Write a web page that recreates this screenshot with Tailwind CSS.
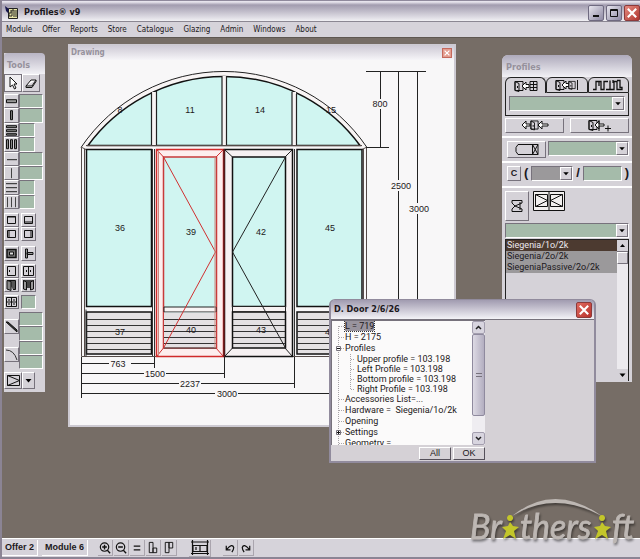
<!DOCTYPE html>
<html lang="en">
<head>
  <meta charset="UTF-8" />
  <meta name="viewport" content="width=device-width, initial-scale=1" />
  <title>Profiles® v9</title>
  <script src="https://cdn.jsdelivr.net/npm/@tailwindcss/browser@4"></script>
</head>
<body class="font-['Liberation_Sans',sans-serif] text-[9px] text-[#1c1820]">
  <!-- Shared icons -->
  <svg class="hidden">
    <symbol id="arrow" viewBox="0 0 11 11"><path d="M2.500 4h6L5.500 7.500z" fill="#000" /></symbol>
    <symbol id="door" viewBox="0 0 10 12"><path d="M1 1.500h8v9h-8zM1 1.500l4 2v8l-4-1z" fill="#d4d0d6" stroke="#111" /><path d="M3.500 6v2" stroke="#111" /></symbol>
    <symbol id="close" viewBox="0 0 10 10"><path d="M2 2l6 6M8 2l-6 6" stroke="#fff" stroke-width="1.500" /></symbol>
  </svg>

  <div class="flex h-screen flex-col overflow-hidden border-l-2 border-[#8b8494] bg-[#d6d3da]">
    <!-- Title bar -->
    <header class="flex h-[21px] shrink-0 items-center gap-1 border-t border-[#8f899c] bg-linear-to-b from-[#e6e3ec] from-5% via-[#a29caf] via-20% to-[#f1f0f4] pl-0.5">
      <svg class="mt-1 h-4 w-4" viewBox="0 0 16 16"><path d="M4.500 3.500h9v10h-9z" fill="#e9e6a8" stroke="#222" /><path d="M7 5v3H5v3h3V5h2v7M12 5v7" fill="none" stroke="#222" /><path d="M1 1l4 3-1 4-2-2z" fill="#15154c" /></svg>
      <h1 class="mt-1 flex-1 font-['DejaVu_Sans_Condensed','DejaVu_Sans',sans-serif] text-[9px] font-bold">Profiles® v9</h1>
      <div class="mt-1 flex gap-0.5">
        <button aria-label="Minimize" class="h-4 w-4 rounded-xs border border-[#6f6a80] bg-linear-to-br from-[#e8e6ee] to-[#8f8aa4]"><svg viewBox="0 0 14 14"><path d="M4 10h6" stroke="#111" stroke-width="2" /></svg></button>
        <button aria-label="Maximize" class="h-4 w-4 rounded-xs border border-[#6f6a80] bg-linear-to-br from-[#e8e6ee] to-[#8f8aa4]"><svg viewBox="0 0 14 14"><path d="M3.500 3.500h7v7h-7zM3 4.500h8" fill="none" stroke="#111" /></svg></button>
        <button aria-label="Close" class="h-4 w-4 rounded-xs border border-[#8d3a3a] bg-linear-to-br from-[#e48a80] to-[#b03430]"><svg class="h-full w-full"><use href="#close" /></svg></button>
      </div>
    </header>

    <!-- Menu -->
    <nav class="flex h-4 shrink-0 items-center gap-[10px] border-t border-[#8b8792] bg-[#d6d3da] pl-1 font-['DejaVu_Sans_Condensed','DejaVu_Sans',sans-serif] text-[8px]">
      <a href="#">Module</a>
      <a href="#">Offer</a>
      <a href="#">Reports</a>
      <a href="#">Store</a>
      <a href="#">Catalogue</a>
      <a href="#">Glazing</a>
      <a href="#">Admin</a>
      <a href="#">Windows</a>
      <a href="#">About</a>
    </nav>

    <main class="relative flex-1 border-t border-[#5e5751] bg-[#766d66]">
      <!-- Tools -->
      <section class="absolute top-[15px] left-[2px] w-[41px] rounded-tr-md bg-[#d5d2d8] pb-[3px]">
        <h2 class="flex h-[21px] items-center rounded-t-sm bg-linear-to-b from-[#b9b5c4] to-[#f2f1f5] pt-1 pl-[3px] font-['DejaVu_Sans_Condensed','DejaVu_Sans',sans-serif] text-[9px] font-bold text-[#96919c]">Tools</h2>
        <div class="flex">
          <button aria-label="Select" class="h-[18px] w-[18px] border border-[#77727c] bg-[#efedf0]"><svg viewBox="0 0 16 16"><path d="M5 2v10l2.500-2 2 4 1.500-1-2-4h3z" fill="#fff" stroke="#111" /></svg></button>
          <button aria-label="Erase" class="h-[18px] w-[18px] border border-t-white border-r-[#77727c] border-b-[#77727c] border-l-white"><svg viewBox="0 0 16 16"><path d="M3 11l5-6h5l-4 6zM3 11v1.500h6L13 6.500V5" fill="#fff" stroke="#111" /></svg></button>
        </div>
        <div class="mt-[2px] grid h-[115px] grid-cols-[15px_1fr] grid-rows-8 pr-0.5">
          <button aria-label="Thick transom" class="border border-t-white border-r-[#77727c] border-b-[#77727c] border-l-white"><svg class="h-full w-full" viewBox="0 0 13 12"><path d="M1.500 4.500h10v3h-10z" fill="#999" stroke="#111" /></svg></button>
          <input aria-label="Thick transom size" class="w-full min-w-0 border border-t-[#77727c] border-r-white border-b-white border-l-[#77727c] bg-[#a5bbaa]" />
          <button aria-label="Thick mullion" class="border border-t-white border-r-[#77727c] border-b-[#77727c] border-l-white"><svg class="h-full w-full" viewBox="0 0 13 12"><path d="M5.500 1.500h2v9h-2z" fill="#777" stroke="#111" /></svg></button>
          <input aria-label="Thick mullion size" class="w-full min-w-0 border border-t-[#77727c] border-r-white border-b-white border-l-[#77727c] bg-[#a5bbaa]" />
          <button aria-label="Thick transoms" class="border border-t-white border-r-[#77727c] border-b-[#77727c] border-l-white"><svg class="h-full w-full" viewBox="0 0 13 12"><path d="M1.500 1.500h10v2h-10zM1.500 5.500h10v2h-10zM1.500 9.500h10v1.500h-10z" fill="#888" stroke="#111" /></svg></button>
          <input aria-label="Thick transoms count" class="w-4 border border-t-[#77727c] border-r-white border-b-white border-l-[#77727c] bg-[#a5bbaa]" />
          <button aria-label="Thick mullions" class="border border-t-white border-r-[#77727c] border-b-[#77727c] border-l-white"><svg class="h-full w-full" viewBox="0 0 13 12"><path d="M1.500 1.500h2v9h-2zM5.500 1.500h2v9h-2zM9.500 1.500h2v9h-2z" fill="#888" stroke="#111" /></svg></button>
          <input aria-label="Thick mullions count" class="w-4 border border-t-[#77727c] border-r-white border-b-white border-l-[#77727c] bg-[#a5bbaa]" />
          <button aria-label="Thin transom" class="border border-t-white border-r-[#77727c] border-b-[#77727c] border-l-white"><svg class="h-full w-full" viewBox="0 0 13 12"><path d="M2 6.500h10" stroke="#222" /></svg></button>
          <input aria-label="Thin transom size" class="w-full min-w-0 border border-t-[#77727c] border-r-white border-b-white border-l-[#77727c] bg-[#a5bbaa]" />
          <button aria-label="Thin mullion" class="border border-t-white border-r-[#77727c] border-b-[#77727c] border-l-white"><svg class="h-full w-full" viewBox="0 0 13 12"><path d="M6.500 1v10" stroke="#444" /></svg></button>
          <input aria-label="Thin mullion size" class="w-full min-w-0 border border-t-[#77727c] border-r-white border-b-white border-l-[#77727c] bg-[#a5bbaa]" />
          <button aria-label="Thin transoms" class="border border-t-white border-r-[#77727c] border-b-[#77727c] border-l-white"><svg class="h-full w-full" viewBox="0 0 13 12"><path d="M1 2.500h11M1 6.500h11M1 10.500h11" stroke="#222" /></svg></button>
          <input aria-label="Thin transoms count" class="w-4 border border-t-[#77727c] border-r-white border-b-white border-l-[#77727c] bg-[#a5bbaa]" />
          <button aria-label="Thin mullions" class="border border-t-white border-r-[#77727c] border-b-[#77727c] border-l-white"><svg class="h-full w-full" viewBox="0 0 13 12"><path d="M2.500 1v10M6.500 1v10M10.500 1v10" stroke="#444" /></svg></button>
          <input aria-label="Thin mullions count" class="w-4 border border-t-[#77727c] border-r-white border-b-white border-l-[#77727c] bg-[#a5bbaa]" />
        </div>
        <div class="mt-1 grid w-8 grid-cols-2 gap-x-0.5">
          <button aria-label="Frame" class="h-[14px] border border-t-white border-r-[#77727c] border-b-[#77727c] border-l-white"><svg class="h-full w-full" viewBox="0 0 13 12"><path d="M2.500 2.500h8v7h-8zM2 3h9" fill="none" stroke="#111" /></svg></button>
          <button aria-label="Sill frame" class="h-[14px] border border-t-white border-r-[#77727c] border-b-[#77727c] border-l-white"><svg class="h-full w-full" viewBox="0 0 13 12"><path d="M2.500 2.500h8v7h-8zM2 8h9" fill="none" stroke="#111" /></svg></button>
          <button aria-label="Left frame" class="h-[14px] border border-t-white border-r-[#77727c] border-b-[#77727c] border-l-white"><svg class="h-full w-full" viewBox="0 0 13 12"><path d="M2.500 2.500h8v7h-8zM4 2v8" fill="none" stroke="#111" /></svg></button>
          <button aria-label="Right frame" class="h-[14px] border border-t-white border-r-[#77727c] border-b-[#77727c] border-l-white"><svg class="h-full w-full" viewBox="0 0 13 12"><path d="M2.500 2.500h8v7h-8zM9 2v8" fill="none" stroke="#111" /></svg></button>
        </div>
        <div class="mt-[5px] grid w-8 grid-cols-2 gap-x-0.5">
          <button aria-label="Sash" class="h-[15px] border border-t-white border-r-[#77727c] border-b-[#77727c] border-l-white"><svg class="h-full w-full" viewBox="0 0 13 13"><path d="M2 2.500h9v8H2z" fill="#777" stroke="#111" stroke-width="1.500" /><path d="M4.500 5h4v3h-4z" fill="#ddd" stroke="#111" /></svg></button>
          <button aria-label="Joint" class="h-[15px] border border-t-white border-r-[#77727c] border-b-[#77727c] border-l-white"><svg class="h-full w-full" viewBox="0 0 13 13"><path d="M3.500 2v9h2V2zM5 5.500h6v2H5z" fill="#999" stroke="#111" /></svg></button>
        </div>
        <div class="mt-[3px] grid w-8 grid-cols-2 gap-x-0.5">
          <button aria-label="Door" class="h-[14px] border border-t-white border-r-[#77727c] border-b-[#77727c] border-l-white"><svg class="h-full w-full" viewBox="0 0 13 12"><path d="M2.500 1.500h8v9h-8zM4.500 5v2" fill="none" stroke="#111" /></svg></button>
          <button aria-label="Double door" class="h-[14px] border border-t-white border-r-[#77727c] border-b-[#77727c] border-l-white"><svg class="h-full w-full" viewBox="0 0 13 12"><path d="M1.500 1.500h10v9h-10zM6.500 1v10M4.500 5v2M8.500 5v2" fill="none" stroke="#111" /></svg></button>
          <button aria-label="Open door" class="h-[14px] border border-t-white border-r-[#77727c] border-b-[#77727c] border-l-white"><svg class="h-full w-full" viewBox="0 0 13 12"><path d="M2 1.500h8.500v9H8" fill="#555" stroke="#111" /><path d="M2 1.500l4 1v9l-4-1.500z" fill="#888" stroke="#111" /></svg></button>
          <button aria-label="Open double door" class="h-[14px] border border-t-white border-r-[#77727c] border-b-[#77727c] border-l-white"><svg class="h-full w-full" viewBox="0 0 13 12"><path d="M1 1h11v8H1z" fill="#444" /><path d="M1.500 1.500l3 1.500v8l-3-1zM11.500 1.500l-3 1.500v8l3-1z" fill="#999" stroke="#111" /></svg></button>
        </div>
        <div class="mt-[3px] grid w-8 grid-cols-2 gap-x-0.5">
          <button aria-label="Grid" class="h-[14px] border border-t-white border-r-[#77727c] border-b-[#77727c] border-l-white"><svg class="h-full w-full" viewBox="0 0 13 12"><path d="M1.500 1.500h10v9h-10zM1 6h11M6.500 1v10M3 4h2M8 4h2M3 8h2M8 8h2" fill="none" stroke="#111" /></svg></button>
          <input aria-label="Grid count" class="h-[14px] w-full min-w-0 border border-t-[#77727c] border-r-white border-b-white border-l-[#77727c] bg-[#a5bbaa]" />
        </div>
        <div class="mt-[3px] flex pr-0.5">
          <div class="flex w-[15px] flex-col justify-around">
            <button aria-label="Thick diagonal" class="h-[15px] border border-t-white border-r-[#77727c] border-b-[#77727c] border-l-white"><svg class="h-full w-full" viewBox="0 0 13 13"><path d="M1 2h2l9 8v2z" fill="#333" stroke="#111" /></svg></button>
            <button aria-label="Arc" class="h-[15px] border border-t-white border-r-[#77727c] border-b-[#77727c] border-l-white"><svg class="h-full w-full" viewBox="0 0 13 13"><path d="M1 2q8 0 11 10" fill="none" stroke="#333" /></svg></button>
          </div>
          <div class="grid h-[57px] flex-1 grid-rows-4">
            <input aria-label="Diagonal X" class="w-full border border-t-[#77727c] border-r-white border-b-white border-l-[#77727c] bg-[#a5bbaa]" />
            <input aria-label="Diagonal Y" class="w-full border border-t-[#77727c] border-r-white border-b-white border-l-[#77727c] bg-[#a5bbaa]" />
            <input aria-label="Arc X" class="w-full border border-t-[#77727c] border-r-white border-b-white border-l-[#77727c] bg-[#a5bbaa]" />
            <input aria-label="Arc Y" class="w-full border border-t-[#77727c] border-r-white border-b-white border-l-[#77727c] bg-[#a5bbaa]" />
          </div>
        </div>
        <div class="mt-[3px] flex">
          <button aria-label="Opening shape" class="h-[17px] w-[18px] border border-t-white border-r-[#77727c] border-b-[#77727c] border-l-white"><svg class="h-full w-full" viewBox="0 0 16 15"><path d="M2.500 2.500h12v10h-12zM2.500 2.500l12 5-12 5" fill="none" stroke="#111" /></svg></button>
          <button aria-label="More shapes" class="h-[17px] w-[13px] border border-t-white border-r-[#77727c] border-b-[#77727c] border-l-white"><svg class="h-full w-full"><use href="#arrow" /></svg></button>
        </div>
      </section>

      <!-- Drawing -->
      <section class="absolute top-[6px] left-[66px] w-[388px] border-2 border-[#cdcad2] bg-[#f8f7f8]">
        <div class="flex h-[14px] items-center justify-between bg-linear-to-b from-[#cfcbd6] to-[#f6f5f8] pr-0.5 pl-px">
          <h2 class="font-['DejaVu_Sans_Condensed','DejaVu_Sans',sans-serif] text-[8px] font-bold text-[#96919c]">Drawing</h2>
          <button aria-label="Close drawing" class="h-[10px] w-[10px] border border-[#c4685c] bg-[#e39c8f]"><svg class="h-full w-full"><use href="#close" /></svg></button>
        </div>
        <svg class="block w-full" viewBox="70 60 384 365" fill="none" stroke="#222" stroke-width="1" font-size="9">
          <!-- arch -->
          <path d="M81 147.500A172.500 172.500 0 0 1 367 147.500" fill="#f8f4f4" />
          <path d="M88 145.500A168.500 168.500 0 0 1 360 145.500z" fill="#d0f5f1" stroke="#111" stroke-width="1.500" />
          <path d="M152 92h4v53h-4zM222 76h4v69h-4zM292 92h4v53h-4z" fill="#f8f4f4" stroke="none" />
          <path d="M151.500 92v53M156.500 91v54M222 76v69M226.500 76v69M292 92v53M296.500 94v51" stroke-width="1.200" />
          <!-- outer frame -->
          <path d="M81.500 147.500v209h285v-209M84.500 149v207M363.500 149v207" stroke="#554b49" />
          <path d="M81 147l5 2.500M367 147l-5 2.500M86 145.500h276" stroke="#554b49" />
          <path d="M86.500 149.500h65v157h-65zM297 149.500h65v157h-65z" fill="#d0f5f1" stroke="#111" stroke-width="1.500" />
          <path d="M86.500 312h65v42h-65zM297 312h65v42h-65z" fill="#e4e1e3" stroke="#111" stroke-width="1.500" />
          <path d="M87 319.500h64M87 325.500h64M87 331.500h64M87 337.500h64M87 343.500h64M87 349.500h64M297 319.500h65M297 325.500h65M297 331.500h65M297 337.500h65M297 343.500h65M297 349.500h65M86 309.500v47M152.500 149v207M154.500 149v207M294.500 149v207" stroke="#333" />
          <!-- right leaf -->
          <path d="M224.500 149.500h68v207h-68z" fill="#f6f1f2" stroke="#111" stroke-width="1.500" />
          <path d="M232.500 157h53v149.500h-53z" fill="#d0f5f1" stroke="#111" stroke-width="1.500" />
          <path d="M232.500 306.500h53v5.500h-53z" fill="#f6f1f2" />
          <path d="M232.500 312h53v36h-53z" fill="#e4e1e3" stroke="#111" stroke-width="1.500" />
          <path d="M233 319.500h52M233 325.500h52M233 331.500h52M233 337.500h52M233 343.500h52" stroke="#333" />
          <path d="M285.500 157L232.500 252l53 96M225 150l7.500 7M292 150l-7 7M225 356l7.500-8M292 356l-7-8" />
          <!-- selected leaf -->
          <path d="M156.500 149.500h67v207h-67z" fill="#fdeeee" stroke="#d02a2a" stroke-width="1.500" />
          <path d="M163.500 157h53v191h-53z" fill="#d0f5f1" stroke="#c83a3a" stroke-width="1.500" />
          <path d="M164 307h52v5h-52z" fill="#f8f4f4" stroke="#222" />
          <path d="M164 312.500h52v35h-52z" fill="#e4e1e3" stroke="none" />
          <path d="M164 319.500h52M164 325.500h52M164 331.500h52M164 337.500h52M164 343.500h52M164 348h52" stroke="#333" />
          <path d="M163.500 157L215.500 252l-52 96M157 150l6.500 7M223 150l-7 7M157 356l6.500-8M223 356l-7-8" stroke="#d03030" />
          <path d="M215 157v191M158.500 150v206" stroke="#c98a80" />
          <path d="M224 149v208" stroke="#5b1a1a" stroke-width="1.500" />
          <!-- vertical dimensions -->
          <path d="M366 71.500h60M380.500 71v28M380.500 109v38M366 147.500h23M398.500 71v109M398.500 191v210M417.500 71v132M417.500 214v210" />
          <!-- horizontal dimensions -->
          <path d="M81.500 357v41M154.500 357v11M224.500 357v21M294.500 357v31M82 363.500h27M131 363.500h23M82 373.500h62M166 373.500h58M82 383.500h97M201 383.500h93M82 393.500h133M238 393.500h128" />
          <g fill="#1c1820" stroke="none" text-anchor="middle">
            <text x="120" y="113">8</text><text x="190" y="113">11</text><text x="260" y="113">14</text><text x="331" y="113">15</text>
            <text x="120" y="231">36</text><text x="191" y="235">39</text><text x="261" y="235">42</text><text x="330" y="231">45</text>
            <text x="120" y="335">37</text><text x="191" y="333">40</text><text x="261" y="333">43</text><text x="330" y="335">46</text>
            <text x="380" y="107">800</text><text x="401" y="189">2500</text><text x="419" y="212">3000</text>
            <text x="118" y="367">763</text><text x="155" y="377">1500</text><text x="190" y="387">2237</text><text x="227" y="397">3000</text>
          </g>
        </svg>
      </section>

      <!-- Profiles -->
      <section class="absolute top-[17px] left-[500px] w-[130px] rounded-t-md bg-[#d5d2d8] px-[3px] pb-px">
        <h2 class="-mx-[3px] flex h-[22px] items-center rounded-t-md bg-linear-to-b from-[#aeaabb] to-[#f2f1f5] pt-1 pl-1 font-['DejaVu_Sans_Condensed','DejaVu_Sans',sans-serif] text-[9px] font-bold text-[#96919c]">Profiles</h2>
        <div class="flex h-4">
          <button aria-label="Insert profile" class="flex-1 rounded-t-md border border-b-0 border-[#222]"><svg class="mx-auto h-3 w-6" viewBox="0 0 24 12"><use href="#door" width="10" height="12" /><path d="M8 6l4-4v2.500h3v3h-3V10z" fill="#fff" stroke="#111" /><path d="M16 1.500h7v9h-7zM16 4.500h7M16 7.500h7M19.500 1v10" fill="none" stroke="#111" /></svg></button>
          <button aria-label="Swap profile" class="flex-1 rounded-t-md border border-[#222]"><svg class="mx-auto h-3 w-6" viewBox="0 0 24 12"><use href="#door" width="10" height="12" /><path d="M7 6l4-4v2.500h3v3h-3V10z" fill="#fff" stroke="#111" /><use href="#door" x="13" width="8" height="12" /><path d="M22.500 1v10" stroke="#111" /></svg></button>
          <button aria-label="Profile sections" class="flex-1 rounded-t-md border border-[#222]"><svg class="mx-auto h-3 w-[30px]" viewBox="0 0 30 12"><path d="M0 10.500h3v-8h5v8h3v-8h4M13 10.500h4v-9M17 10.500h4v-8h3v8h5v-2h-2V1.500h-3M6 2v5M20 1v3" fill="none" stroke="#111" stroke-width="1.300" /></svg></button>
        </div>
        <div class="border border-t-0 border-[#222] px-[3px] pt-[3px] pb-1">
          <div class="flex h-[15px] border border-t-[#77727c] border-r-white border-b-white border-l-[#77727c] bg-[#a5bbaa]">
            <select aria-label="Profile system" class="min-w-0 flex-1 appearance-none"><option></option></select>
            <svg class="w-3 border border-t-white border-r-[#77727c] border-b-[#77727c] border-l-white bg-[#d5d2d8]"><use href="#arrow" /></svg>
          </div>
        </div>
        <div class="mt-0.5 flex gap-1.5">
          <button aria-label="Replace profiles" class="h-[15px] flex-1 border border-t-white border-r-[#77727c] border-b-[#77727c] border-l-white"><svg class="mx-auto h-[13px] w-7" viewBox="0 0 28 13"><path d="M1 6l4-4v3h4v2H5v3z" fill="#fff" stroke="#111" /><use href="#door" x="9" width="9" height="12" /><path d="M17 6l4-4v3h6v2h-6v3z" fill="#fff" stroke="#111" /></svg></button>
          <button aria-label="Add profile" class="h-[15px] flex-1 border border-t-white border-r-[#77727c] border-b-[#77727c] border-l-white"><svg class="mx-auto h-[13px] w-6" viewBox="0 0 24 13"><use href="#door" width="10" height="12" /><path d="M7 6l4-4v3h5v2h-5v3zM11 1v11" fill="#fff" stroke="#111" /><path d="M17 9.500h6M20 6.500v6" stroke="#111" /></svg></button>
        </div>
        <div class="-mx-[3px] mt-[3px] flex items-start gap-0.5 border-t-2 border-white px-[3px] pt-[3px]">
          <button aria-label="Panel" class="ml-0.5 h-[17px] w-[39px] border border-t-white border-r-[#77727c] border-b-[#77727c] border-l-white"><svg class="mx-auto h-[15px] w-[26px]" viewBox="0 0 26 15"><path d="M4 2.500h20v10H4l-2-3v-4zM18.500 2.500v10M18.500 2.500l5.500 10M24 2.500l-5.500 10" fill="none" stroke="#111" /></svg></button>
          <div class="flex h-[15px] flex-1 border border-t-[#77727c] border-r-white border-b-white border-l-[#77727c] bg-[#a5bbaa]">
            <select aria-label="Panel type" class="min-w-0 flex-1 appearance-none"><option></option></select>
            <svg class="w-3 border border-t-white border-r-[#77727c] border-b-[#77727c] border-l-white bg-[#d5d2d8]"><use href="#arrow" /></svg>
          </div>
        </div>
        <div class="-mx-[3px] mt-[3px] flex items-center gap-[3px] border-t-2 border-white px-[3px] pt-0.5 text-[13px] leading-4 font-bold">
          <button class="ml-0.5 h-[15px] w-[14px] border border-t-white border-r-[#77727c] border-b-[#77727c] border-l-white text-[9px] leading-3">C</button>
          <span>(</span>
          <div class="flex h-[15px] w-[42px] border border-t-[#77727c] border-r-white border-b-white border-l-[#77727c] bg-[#9b999b]">
            <select aria-label="Numerator" class="min-w-0 flex-1 appearance-none"><option></option></select>
            <svg class="w-3 border border-t-white border-r-[#77727c] border-b-[#77727c] border-l-white bg-[#d5d2d8]"><use href="#arrow" /></svg>
          </div>
          <span>/</span>
          <input aria-label="Denominator" class="h-[15px] w-0 flex-1 border border-t-[#77727c] border-r-white border-b-white border-l-[#77727c] bg-[#a5bbaa]" />
          <span>)</span>
        </div>
        <div class="-mx-[3px] mt-[5px] flex items-start gap-1 border-t-2 border-white px-[3px] pt-[3px]">
          <button aria-label="Hardware" class="h-[30px] w-6 border border-t-white border-r-[#77727c] border-b-[#77727c] border-l-white"><svg class="mx-auto h-4 w-4" viewBox="0 0 16 16"><path d="M13 5V2.500H3V5l3 3-3 3v2.500h10V11M13 5L6 8l7 3M11 4v8" fill="none" stroke="#111" /></svg></button>
          <svg class="h-5 w-8" viewBox="0 0 32 20"><path d="M.500 .500h31v19H.500z" fill="#f2f0ef" stroke="#111" /><path d="M2.500 3.500h12v12h-12v-12l12 6-12 6M17.500 3.500h12v12h-12v-12M29.500 3.500l-12 6 12 6M16 1v18" fill="none" stroke="#111" /></svg>
        </div>
        <div class="mt-0.5 flex h-[15px] border border-t-[#77727c] border-r-white border-b-white border-l-[#77727c] bg-[#a5bbaa]">
          <select aria-label="Hardware group" class="min-w-0 flex-1 appearance-none"><option></option></select>
          <svg class="w-3 border border-t-white border-r-[#77727c] border-b-[#77727c] border-l-white bg-[#d5d2d8]"><use href="#arrow" /></svg>
        </div>
        <div class="mt-px flex h-[142px] border-t border-l border-[#222]">
          <ul role="listbox" aria-label="Hardware sets" class="flex-1 font-['Roboto','Liberation_Sans',sans-serif] text-[9px] leading-[11px]">
            <li role="option" aria-selected="true" class="bg-[#4c3a30] pl-px text-[#eeeaf0]">Siegenia/1o/2k</li>
            <li role="option" class="bg-[#9b999b] pl-px">Siegenia/2o/2k</li>
            <li role="option" class="bg-[#9b999b] pl-px">SiegeniaPassive/2o/2k</li>
          </ul>
          <div class="flex w-3 flex-col border-r border-[#222] bg-[#eceaee]">
            <svg class="h-3 border-b border-[#77727c] bg-[#d5d2d8]" viewBox="0 0 11 11"><path d="M3 7h5L5.500 4z" fill="#000" /></svg>
            <div class="h-3 border border-t-white border-r-[#77727c] border-b-[#77727c] border-l-white bg-[#d5d2d8]"></div>
            <svg class="mt-auto h-3 bg-[#d5d2d8]" viewBox="0 0 11 11"><use href="#arrow" /></svg>
          </div>
        </div>
      </section>

      <!-- Door properties -->
      <section role="dialog" aria-label="D. Door 2/6/26" class="absolute top-[261px] left-[327px] w-[267px] rounded-t-md border-2 border-t border-[#918b9d] bg-[#d5d1d6]">
        <div class="flex h-[20px] items-center justify-between rounded-t-sm border-b border-[#77727c] bg-linear-to-b from-[#a19bb0] to-[#f4f3f7] pr-0.5 pl-[3px]">
          <h2 class="font-['DejaVu_Sans_Condensed','DejaVu_Sans',sans-serif] text-[9px] font-bold">D. Door 2/6/26</h2>
          <button aria-label="Close" class="h-4 w-4 rounded-xs border border-[#8d3a3a] bg-linear-to-br from-[#e06a60] to-[#b8302c]"><svg class="h-full w-full"><use href="#close" /></svg></button>
        </div>
        <div class="flex h-[125px] w-[154px] border-t border-l border-[#77727c] bg-[#fbfafa]">
          <div class="relative flex-1 overflow-hidden">
            <svg class="absolute top-0 left-0 h-[124px] w-6" viewBox="0 0 24 124" fill="none">
              <path d="M6.500 5v119M7 5.500h6M7 16.500h6M7 27.500h6M7 78.500h6M7 89.500h6M7 100.500h6M7 111.500h6M7 122.500h6M18.500 33v35M19 38.500h4M19 48.500h4M19 58.500h4M19 68.500h4" stroke="#a9a5a9" stroke-dasharray="1 1" />
              <path d="M4.500 25.500h4v4h-4zM4.500 109.500h4v4h-4z" fill="#fff" stroke="#77727c" /><path d="M5 27.500h3M5 111.500h3M6.500 110v3" stroke="#111" />
            </svg>
            <ul class="pl-[13px] font-['Roboto','Liberation_Sans',sans-serif] text-[9px] leading-[11px] whitespace-nowrap">
              <li><span class="bg-[#99949e] outline-1 outline-dotted outline-[#333]">L = 719</span></li>
              <li>H = 2175</li>
              <li>Profiles
                <ul class="pl-3 leading-[10px]">
                  <li>Upper profile = 103.198</li>
                  <li>Left Profile = 103.198</li>
                  <li>Bottom profile = 103.198</li>
                  <li>Right Profile = 103.198</li>
                </ul>
              </li>
              <li>Accessories List=...</li>
              <li>Hardware =&nbsp; Siegenia/1o/2k</li>
              <li>Opening</li>
              <li>Settings</li>
              <li>Geometry =</li>
            </ul>
          </div>
          <div class="flex w-[13px] flex-col bg-[#efedf1]">
            <button aria-label="Scroll up" class="h-[13px] rounded-xs border border-[#a39eae] bg-[#d8d5df]"><svg class="h-full w-full" viewBox="0 0 11 11"><path d="M3 7l2.500-2.500L8 7" fill="none" stroke="#222" stroke-width="1.500" /></svg></button>
            <div class="flex h-[82px] items-center justify-center rounded-xs border border-[#8f8a9e] bg-linear-to-r from-[#dddae4] to-[#b3aec0]"><svg class="h-1 w-1.5" viewBox="0 0 6 4"><path d="M0 .500h6M0 3.500h6" stroke="#77727c" /></svg></div>
            <button aria-label="Scroll down" class="mt-auto h-[13px] rounded-xs border border-[#a39eae] bg-[#d8d5df]"><svg class="h-full w-full" viewBox="0 0 11 11"><path d="M3 4l2.500 2.500L8 4" fill="none" stroke="#222" stroke-width="1.500" /></svg></button>
          </div>
        </div>
        <div class="flex w-[154px] justify-end gap-0.5 pt-0.5 pb-px leading-[11px]">
          <button class="h-[13px] w-8 border border-t-white border-r-[#55505a] border-b-[#55505a] border-l-white">All</button>
          <button class="h-[13px] w-8 border border-t-white border-r-[#55505a] border-b-[#55505a] border-l-white">OK</button>
        </div>
      </section>

      <!-- Brothersoft mark -->
      <svg class="absolute right-0 -bottom-3 z-10 h-[56px] w-[172px] drop-shadow-[1px_2px_1px_rgb(0_0_0/0.45)]" viewBox="468 494 172 56" fill="#bdb7b3" font-family="Lato, sans-serif" font-size="34" font-style="italic">
        <path d="M512 516Q554 482 602 516Q554 490 512 516z" />
        <g stroke="#bdb7b3" stroke-width=".8">
          <text x="470" y="539">Br</text>
          <text x="520" y="539">thers</text>
          <text x="612" y="539">ft</text>
        </g>
        <g fill="#c3c62a">
          <path id="star" d="M510 521a3 3 0 1 1 .1 0M502 527l6-1 2-4 3 4 6 1-5 4 2 8-6-4-7 4 3-8z" />
          <use href="#star" x="92" />
        </g>
      </svg>
    </main>

    <!-- Status bar -->
    <footer class="flex h-[21px] shrink-0 items-center border-t border-b-2 border-t-white border-b-[#8b8494] bg-[#d6d3da] text-[9px] font-bold">
      <span class="mr-1 flex h-4 w-9 items-center border-r border-b border-white pl-[3px] whitespace-nowrap">Offer 2</span>
      <span class="flex h-4 w-[46px] items-center border-r border-b border-white pl-[3px] whitespace-nowrap">Module 6</span>
      <div class="ml-[10px] flex gap-px">
        <button aria-label="Zoom in" class="h-4 w-[15px] border-r border-b border-[#aaa5ae]"><svg viewBox="0 0 15 15"><circle cx="7" cy="6.500" r="4.500" fill="none" stroke="#111" stroke-width="1.300" /><path d="M4.500 6.500h5M7 4v5M10 10l3 3" stroke="#111" stroke-width="1.500" /></svg></button>
        <button aria-label="Zoom out" class="h-4 w-[15px] border-r border-b border-[#aaa5ae]"><svg viewBox="0 0 15 15"><circle cx="7" cy="6.500" r="4.500" fill="none" stroke="#111" stroke-width="1.300" /><path d="M4.500 6.500h5M10 10l3 3" stroke="#111" stroke-width="1.500" /></svg></button>
        <button aria-label="Equal size" class="h-4 w-[15px] border-r border-b border-[#aaa5ae]"><svg viewBox="0 0 15 15"><path d="M4 5.500h7M4 9.500h7" stroke="#111" stroke-width="1.500" /></svg></button>
        <button aria-label="Align bottom" class="h-4 w-[15px] border-r border-b border-[#aaa5ae]"><svg viewBox="0 0 15 15"><path d="M3.500 1.500h4v11h-4zM7.500 7.500h4v5h-4z" fill="none" stroke="#111" /></svg></button>
        <button aria-label="Align top" class="h-4 w-[15px] border-r border-b border-[#aaa5ae]"><svg viewBox="0 0 15 15"><path d="M3.500 1.500h4v11h-4zM7.500 1.500h4v6h-4z" fill="none" stroke="#111" /></svg></button>
      </div>
      <button aria-label="Dimensions" class="ml-3 h-[17px] w-[22px] border-r border-b border-[#aaa5ae]"><svg viewBox="0 0 21 16"><path d="M3.500 0v15M18.500 0v15M2 2h18M4 5.500h14v6H4zM11 5v6M2 13.500h18M7 7v3" fill="none" stroke="#111" stroke-width="1.200" /></svg></button>
      <button aria-label="Undo" class="ml-3 h-4 w-[15px] border-r border-b border-[#aaa5ae]"><svg viewBox="0 0 15 15"><path d="M3.500 5v4.500H8M4 9q6-7 7.500-2 0 2-2 5" fill="none" stroke="#111" stroke-width="1.300" /></svg></button>
      <button aria-label="Redo" class="ml-px h-4 w-[15px] border-r border-b border-[#aaa5ae]"><svg viewBox="0 0 15 15"><path d="M11.500 5v4.500H7M11 9Q5 2 3.500 7q0 2 2 5" fill="none" stroke="#111" stroke-width="1.300" /></svg></button>
    </footer>
  </div>
</body>
</html>
